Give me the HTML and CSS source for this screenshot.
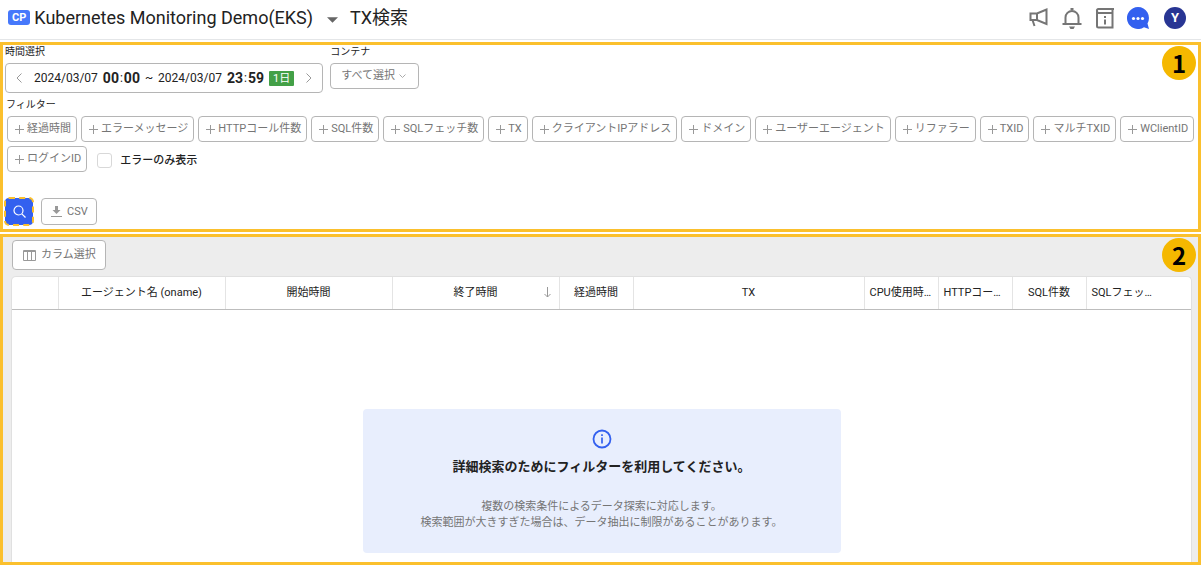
FILE: index.html
```html
<!DOCTYPE html>
<html lang="ja">
<head>
<meta charset="utf-8">
<meta name="viewport" content="width=device-width, initial-scale=1">
<title>TX検索</title>
<link rel="stylesheet" href="styles.css">
</head>
<body>
<header class="topbar">
  <span class="product">CP</span>
  <button class="project" type="button">Kubernetes Monitoring Demo(EKS)
    <svg width="11" height="6" viewBox="0 0 12 6"><path d="M0 0h12L6 6z" fill="#666"/></svg>
  </button>
  <h1 class="page-title">TX検索</h1>
  <nav class="tools">
    <button class="tool" type="button" aria-label="お知らせ">
      <svg width="22" height="22" viewBox="0 0 22 22" fill="none" stroke="#757575" stroke-width="2"><path d="M2.500 6.500v6.500H9l9.500 4V2.500L9 6.500zM9 6.500V13M4.500 13l2 6"/></svg>
    </button>
    <button class="tool" type="button" aria-label="通知">
      <svg width="22" height="22" viewBox="0 0 22 22" fill="none" stroke="#757575" stroke-width="2"><path d="M1.500 17h19M4.500 17v-6.500a6.500 6.500 0 0 1 13 0V17"/><path d="M9.500 3V1h3v2M8 19.500h6l-1.500 2.500h-3z" fill="#757575" stroke="none"/></svg>
    </button>
    <button class="tool" type="button" aria-label="ガイド">
      <svg width="22" height="22" viewBox="0 0 22 22" fill="none" stroke="#757575" stroke-width="2"><path d="M20 2H4.500a1.500 1.500 0 0 0-1.500 2V19a1.500 1.500 0 0 0 1.500 1.500h14V6H4.500A2 2 0 0 1 3 4M18.500 2v4"/><path d="M11 9v2M11 12.500v5"/></svg>
    </button>
    <button class="tool" type="button" aria-label="チャット">
      <svg width="22" height="22" viewBox="0 0 22 22"><path d="M11 0a11 11 0 1 0 6 20.200L22 22l-1.500-5.500A11 11 0 0 0 11 0z" fill="#3360ef"/><g fill="#fff"><circle cx="6.500" cy="11.500" r="1.600"/><circle cx="11" cy="11.500" r="1.600"/><circle cx="15.500" cy="11.500" r="1.600"/></g></svg>
    </button>
    <button class="avatar" type="button">Y</button>
  </nav>
</header>
<main class="panels">
  <section class="panel search">
    <span class="marker">1</span>
    <div class="fields">
      <div class="field">
        <span class="label">時間選択</span>
        <div class="range">
          <button class="step" type="button" aria-label="前へ"><svg width="6" height="10" viewBox="0 0 6 10"><path d="M5.500.5L1 5l4.500 4.500" fill="none" stroke="#999"/></svg></button>
          <span class="dates"><span>2024/03/07</span><span class="time"><b>00</b>:<b>00</b></span><span>~</span><span>2024/03/07</span><span class="time"><b>23</b>:<b>59</b></span><span class="day">1日</span></span>
          <button class="step" type="button" aria-label="次へ"><svg width="6" height="10" viewBox="0 0 6 10"><path d="M.5.5L5 5 .5 9.500" fill="none" stroke="#999"/></svg></button>
        </div>
      </div>
      <div class="field">
        <label class="label" for="container">コンテナ</label>
        <div class="select-wrap">
          <select id="container" class="select"><option>すべて選択</option></select>
          <svg class="chevron" width="7" height="5" viewBox="0 0 7 5"><path d="M.5.5l3 3 3-3" fill="none" stroke="#aaa"/></svg>
        </div>
      </div>
    </div>
    <div class="label filter-label">フィルター</div>
    <svg class="defs" width="0" height="0"><symbol id="plus" viewBox="0 0 9 9"><path d="M4.500 0v9M0 4.500h9" stroke="#999" fill="none"/></symbol></svg>
    <div class="chips">
      <button class="chip" type="button"><svg width="9" height="9"><use href="#plus"/></svg>経過時間</button>
      <button class="chip" type="button"><svg width="9" height="9"><use href="#plus"/></svg>エラーメッセージ</button>
      <button class="chip" type="button"><svg width="9" height="9"><use href="#plus"/></svg>HTTPコール件数</button>
      <button class="chip" type="button"><svg width="9" height="9"><use href="#plus"/></svg>SQL件数</button>
      <button class="chip" type="button"><svg width="9" height="9"><use href="#plus"/></svg>SQLフェッチ数</button>
      <button class="chip" type="button"><svg width="9" height="9"><use href="#plus"/></svg>TX</button>
      <button class="chip" type="button"><svg width="9" height="9"><use href="#plus"/></svg>クライアントIPアドレス</button>
      <button class="chip" type="button"><svg width="9" height="9"><use href="#plus"/></svg>ドメイン</button>
      <button class="chip" type="button"><svg width="9" height="9"><use href="#plus"/></svg>ユーザーエージェント</button>
      <button class="chip" type="button"><svg width="9" height="9"><use href="#plus"/></svg>リファラー</button>
      <button class="chip" type="button"><svg width="9" height="9"><use href="#plus"/></svg>TXID</button>
      <button class="chip" type="button"><svg width="9" height="9"><use href="#plus"/></svg>マルチTXID</button>
      <button class="chip" type="button"><svg width="9" height="9"><use href="#plus"/></svg>WClientID</button>
      <button class="chip" type="button"><svg width="9" height="9"><use href="#plus"/></svg>ログインID</button>
      <label class="only-errors"><input class="check" type="checkbox">エラーのみ表示</label>
    </div>
    <div class="actions">
      <button class="go" type="button" aria-label="検索"><svg width="13" height="13" viewBox="0 0 13 13" fill="none" stroke="#fff" stroke-width="1.200"><circle cx="5.500" cy="5.500" r="4.500"/><path d="M8.800 8.800l3.700 3.700"/></svg></button>
      <button class="csv" type="button"><svg width="11" height="12" viewBox="0 0 11 12" fill="#999"><path d="M4 0h3v4h2.500l-4 4-4-4H4zM0 10h11v1H0z"/></svg>CSV</button>
    </div>
  </section>
  <section class="panel results">
    <span class="marker">2</span>
    <button class="columns" type="button"><svg width="13" height="11" viewBox="0 0 13 11" fill="none" stroke="#999"><path d="M.5.500h12v10H.5zM4.500 0v11M8.500 0v11M0 1.500h13"/></svg>カラム選択</button>
    <div class="card">
      <table class="grid">
        <colgroup><col class="c-index"><col class="c-wide"><col class="c-wide"><col class="c-wide"><col class="c-num"><col class="c-tx"><col class="c-num"><col class="c-num"><col class="c-num"><col></colgroup>
        <thead><tr>
          <td></td><th>エージェント名 (oname)</th><th>開始時間</th>
          <th class="sorted">終了時間<svg class="arrow" width="7" height="11" viewBox="0 0 7 11"><path d="M3.500 0v10M.5 7l3 3 3-3" fill="none" stroke="#999"/></svg></th>
          <th>経過時間</th><th>TX</th><th>CPU使用時間</th><th>HTTPコール件数</th><th>SQL件数</th><th class="last">SQLフェッチ数</th>
        </tr></thead>
      </table>
      <div class="notice">
        <svg width="20" height="20" viewBox="0 0 20 20" fill="none" stroke="#3360ef"><circle cx="10" cy="10" r="8.500" stroke-width="1.800"/><path d="M10 5.200v1.800M10 8.500v6" stroke-width="1.700"/></svg>
        <h2 class="notice-title">詳細検索のためにフィルターを利用してください。</h2>
        <p class="notice-text">複数の検索条件によるデータ探索に対応します。<br>検索範囲が大きすぎた場合は、データ抽出に制限があることがあります。</p>
      </div>
    </div>
  </section>
</main>
</body>
</html>
```
FILE: styles.css
```css
* { box-sizing: border-box; }

body {
  margin: 0;
  min-height: 100vh;
  display: flex;
  flex-direction: column;
  background: #fff;
  color: #222;
  font: 11px/16px Roboto, "Noto Sans CJK JP", sans-serif;
}

button, select, input { font: inherit; color: inherit; margin: 0; }
button { padding: 0; border: 0; background: none; white-space: nowrap; }
svg { display: block; flex: none; }

/* Header */
.topbar {
  display: flex;
  align-items: center;
  height: 40px;
  padding: 0 15px 4px 8px;
  border-bottom: 1px solid #e4e6e8;
}
.product {
  margin-right: 4px;
  padding: 0 4px;
  border-radius: 3px;
  background: #4678fb;
  color: #fff;
  font-size: 11px;
  font-weight: 700;
  line-height: 15px;
}
.project {
  display: flex;
  align-items: center;
  gap: 14px;
  font-size: 18px;
  line-height: 24px;
}
.project svg { margin-top: 4px; }
.page-title { margin: 0 0 0 12px; font-size: 18px; font-weight: 400; line-height: 24px; }
.tools { display: flex; align-items: center; gap: 11px; margin-left: auto; }
.avatar {
  width: 22px;
  height: 22px;
  border-radius: 50%;
  margin-left: 4px;
  background: #283593;
  color: #fff;
  font-size: 13px;
  font-weight: 700;
}

/* Panels */
.panels {
  flex: 1;
  display: flex;
  flex-direction: column;
  gap: 2px;
  padding: 2px 0;
}
.panel { position: relative; border: 3px solid #fbc02d; }
.marker {
  position: absolute;
  top: 1px;
  right: 2px;
  width: 34px;
  border-radius: 50%;
  background: #f5b800;
  color: #000;
  font: 700 24px/34px "Noto Sans CJK JP", sans-serif;
  text-align: center;
}

/* Search conditions */
.search { padding: 0 2px 4px; }
.fields { display: flex; align-items: flex-start; gap: 7px; }
.label { display: block; font-size: 10px; line-height: 14px; }
.field .label { margin-bottom: 4px; }
.range {
  display: flex;
  align-items: center;
  gap: 12px;
  height: 30px;
  padding: 0 10px;
  border: 1px solid #b5b5b5;
  border-radius: 4px;
}
.dates { display: flex; align-items: center; gap: 5px; font-size: 12px; }
.time { display: flex; gap: 1px; }
.dates b { font-size: 14px; }
.day {
  padding: 0 4px;
  border-radius: 1px;
  background: #43a047;
  color: #fff;
  font-size: 11px;
  line-height: 15px;
}
.select-wrap { position: relative; }
.select {
  appearance: none;
  height: 26px;
  padding: 0 22px 0 10px;
  border: 1px solid #b5b5b5;
  border-radius: 4px;
  background: #fff;
  color: #757575;
}
.chevron { position: absolute; right: 13px; top: 11px; pointer-events: none; }
.filter-label { margin: 5px 0 4px 1px; }
.defs { position: absolute; }
.chips { display: flex; flex-wrap: wrap; gap: 4px; padding-left: 2px; }
.chip, .csv, .columns {
  display: flex;
  align-items: center;
  border: 1px solid #b5b5b5;
  border-radius: 4px;
  background: #fff;
  color: #757575;
}
.chip { gap: 3px; height: 26px; padding: 0 5px 0 7px; }
.only-errors {
  display: flex;
  align-items: center;
  gap: 8px;
  margin-left: 6px;
  padding-top: 3px;
  font-weight: 500;
}
.check {
  appearance: none;
  width: 15px;
  height: 15px;
  border: 1px solid #d8d8d8;
  border-radius: 3px;
  background: #fff;
}
.actions { display: flex; gap: 8px; margin-top: 26px; }
.go {
  display: grid;
  place-items: center;
  width: 28px;
  height: 27px;
  border-radius: 4px;
  background: #3360ef;
  outline: 2px dashed #fbc02d;
  outline-offset: -1px;
}
.csv { gap: 5px; height: 27px; padding: 0 8px 0 9px; }

/* Results */
.results {
  flex: 1;
  display: flex;
  flex-direction: column;
  align-items: flex-start;
  padding: 3px 6px 0 8px;
  background: #ededed;
}
.columns { gap: 5px; height: 30px; margin-left: 1px; padding: 0 9px 0 10px; }
.card {
  flex: 1;
  width: 100%;
  margin-top: 6px;
  border: 1px solid #e0e0e0;
  border-bottom: 0;
  border-radius: 5px 5px 0 0;
  background: #fff;
}
.grid { width: 100%; table-layout: fixed; border-collapse: collapse; }
.grid th, .grid td {
  height: 32px;
  padding: 0 5px;
  border-bottom: 1px solid #bdbdbd;
  border-left: 1px solid #e4e4e4;
  font-weight: 400;
  text-align: center;
  overflow: hidden;
  text-overflow: ellipsis;
  white-space: nowrap;
}
.grid td { border-left: 0; }
.grid .last { padding-right: 38px; }
.sorted { position: relative; }
.arrow { position: absolute; right: 8px; top: 10px; }
.c-index { width: 46px; }
.c-wide { width: 167px; }
.c-num { width: 74px; }
.c-tx { width: 231px; }

.notice {
  display: flex;
  flex-direction: column;
  align-items: center;
  max-width: 478px;
  margin: 99px auto 9px;
  padding: 20px 16px 22px;
  border-radius: 4px;
  background: #e8eefd;
  text-align: center;
}
.notice-title { margin: 8px 0 22px; font-size: 13px; font-weight: 700; line-height: 20px; }
.notice-text { margin: 0; color: #757575; }
```
